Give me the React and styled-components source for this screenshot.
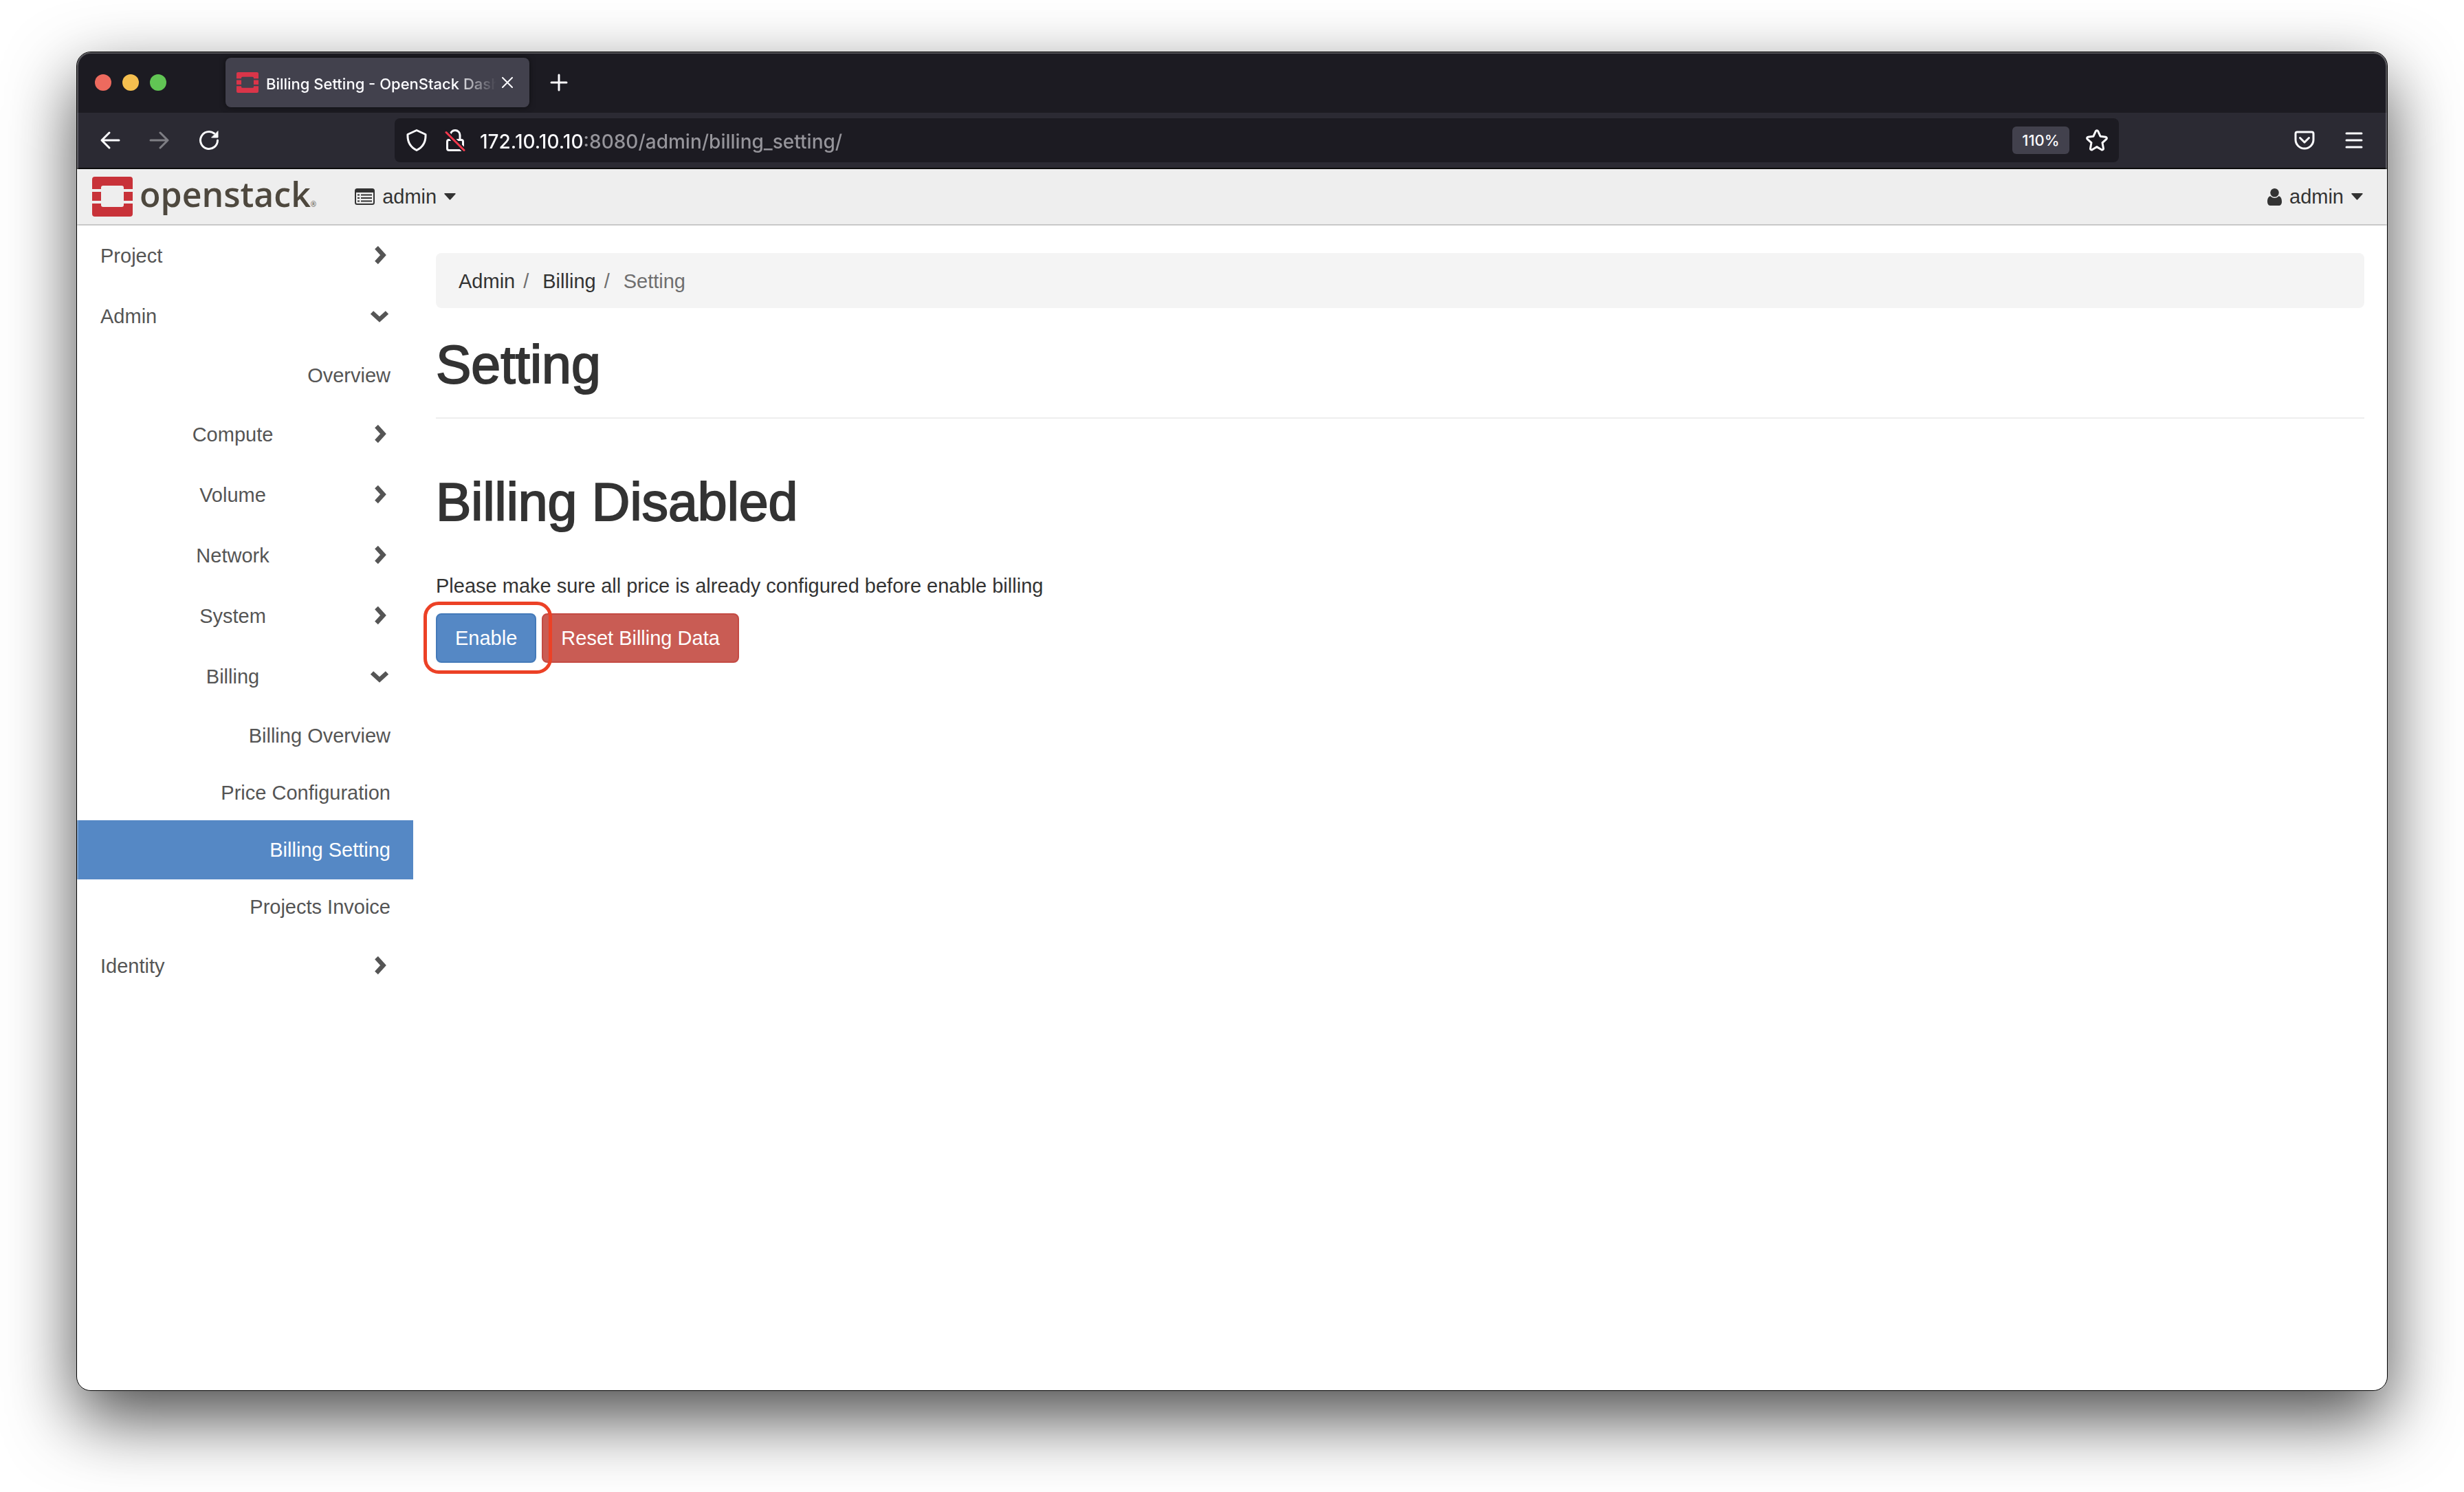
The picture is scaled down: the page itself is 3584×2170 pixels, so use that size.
import React from "react";
import styled, { createGlobalStyle, css } from "styled-components";

const GlobalStyle = createGlobalStyle`
  *, *::before, *::after { box-sizing: border-box; }
  body {
    margin: 0;
    background: #fff;
    font-family: "Liberation Sans", Arial, sans-serif;
    font-size: 29px;
    line-height: 40px;
    color: #333;
  }
  button, input { font: inherit; color: inherit; }
  a { color: inherit; text-decoration: none; }
  svg { display: block; flex: none; }
`;

const plainButton = css`
  display: flex;
  align-items: center;
  justify-content: center;
  padding: 0;
  border: 0;
  background: none;
  cursor: pointer;
`;

/* Desktop and window */

const Desktop = styled.div`
  display: flex;
  min-height: 100vh;
  padding: 75px 111px 147px;
  overflow: hidden;
`;

const Window = styled.div`
  position: relative;
  display: flex;
  flex: 1;
  flex-direction: column;
  min-width: 0;
  border: 1px solid #000;
  border-radius: 21px;
  background: #fff;
  box-shadow: 0 40px 100px rgba(0, 0, 0, 0.7);
  overflow: hidden;

  &::after {
    content: "";
    position: absolute;
    inset: 0;
    border-radius: 20px;
    box-shadow: inset 0 0 0 2px rgba(255, 255, 255, 0.25);
    pointer-events: none;
  }
`;

/* Browser chrome */

const TabStrip = styled.div`
  display: flex;
  align-items: center;
  height: 88px;
  padding-left: 26px;
  background: #1c1b22;
  color: #fbfbfe;
`;

const WindowControls = styled.div`
  display: flex;
  gap: 16px;
  margin-right: 86px;
`;

const WindowControl = styled.button`
  width: 24px;
  height: 24px;
  padding: 0;
  border: 0;
  border-radius: 50%;
  background: ${(p) => p.$color};
`;

const Tab = styled.div`
  display: flex;
  align-items: center;
  width: 442px;
  height: 72px;
  padding: 0 16px;
  border-radius: 8px;
  background: #42414d;
  box-shadow: 0 0 8px rgba(0, 0, 0, 0.5);
`;

const TabTitle = styled.span`
  flex: 1;
  min-width: 0;
  margin-left: 11px;
  padding-top: 3px;
  overflow: hidden;
  white-space: nowrap;
  font-family: Inter, "Liberation Sans", sans-serif;
  font-size: 22px;
  font-weight: 500;
  mask-image: linear-gradient(90deg, #000 calc(100% - 60px), transparent);
`;

const TabClose = styled.button`
  ${plainButton}
  width: 32px;
  height: 32px;
`;

const NewTab = styled.button`
  ${plainButton}
  width: 86px;
  height: 72px;
`;

const Toolbar = styled.div`
  display: flex;
  align-items: center;
  height: 82px;
  padding: 0 12px;
  border-bottom: 2px solid #0c0c0d;
  background: #2b2a33;
  color: #fbfbfe;
`;

const ToolButton = styled.button`
  ${plainButton}
  width: 72px;
  height: 64px;
  opacity: ${(p) => (p.disabled ? 0.4 : 1)};
`;

const ToolSpacer = styled.div`
  flex: 0 0 234px;
`;

const AddressBar = styled.div`
  display: flex;
  flex: 1;
  align-items: center;
  height: 64px;
  padding: 0 16px;
  border-radius: 8px;
  background: #1c1b22;
`;

const SiteButton = styled.button`
  ${plainButton}
  width: 32px;
  height: 40px;
  margin-right: ${(p) => p.$after}px;
`;

const AddressInput = styled.input`
  flex: 1;
  min-width: 0;
  height: 44px;
  padding: 3px 0 0;
  border: 0;
  outline: 0;
  font-family: Inter, "Liberation Sans", sans-serif;
  font-size: 28px;
  font-weight: 500;
  background: linear-gradient(90deg, #fbfbfe 153px, #96959b 153px);
  background-clip: text;
  -webkit-text-fill-color: transparent;
`;

const ZoomBadge = styled.button`
  ${plainButton}
  width: 83px;
  height: 40px;
  margin-right: 24px;
  border-radius: 6px;
  background: #42414d;
  font-family: Inter, "Liberation Sans", sans-serif;
  font-size: 22px;
  font-weight: 500;
`;

/* Dashboard header */

const Header = styled.header`
  display: flex;
  align-items: center;
  justify-content: space-between;
  height: 82px;
  padding: 0 35px 0 22px;
  border-bottom: 2px solid #c8c8c8;
  background: #eee;
`;

const HeaderLeft = styled.div`
  display: flex;
  align-items: center;
  gap: 56px;
`;

const Brand = styled.a`
  display: flex;
  align-items: center;
  gap: 10px;
`;

const BrandName = styled.span`
  padding-bottom: 8px;
  font-family: "Open Sans", "Noto Sans", sans-serif;
  font-size: 50px;
  font-weight: 600;
  line-height: 64px;
  color: #4e483e;
`;

const Registered = styled.small`
  font-size: 10px;
  font-weight: 400;
  line-height: 10px;
`;

const Menu = styled.button`
  ${plainButton}
  gap: 11px;
`;

/* Dashboard body */

const Body = styled.div`
  display: flex;
  flex: 1;
`;

const Sidebar = styled.nav`
  flex: 0 0 489px;
  color: #555;
`;

const NavList = styled.ul`
  display: flex;
  flex-direction: column;
  margin: 0;
  padding: 0;
  list-style: none;
`;

const NavToggle = styled.button`
  ${plainButton}
  gap: 4px;
  width: 100%;
  height: 88px;
  padding: 0 34px;
  text-align: ${(p) => (p.$level === 1 ? "left" : "center")};
`;

const NavLabel = styled.span`
  flex: 1;
`;

const LeafItem = styled.li`
  margin: -1px 0;

  & + & {
    margin-top: -2px;
  }
`;

const Leaf = styled.a`
  display: flex;
  align-items: center;
  justify-content: flex-end;
  height: 86px;
  padding: 0 33px;
  background: ${(p) => (p.$active ? "#5588c5" : "transparent")};
  color: ${(p) => (p.$active ? "#fff" : "inherit")};
`;

const Main = styled.main`
  flex: 1;
  min-width: 0;
  padding: 40px 33px;
`;

const Breadcrumb = styled.ol`
  display: flex;
  margin: 0;
  padding: 21px 33px 19px;
  border-radius: 8px;
  background: #f4f4f4;
  list-style: none;
`;

const Crumb = styled.li`
  color: ${(p) => (p.$current ? "#6f6f6f" : "#333")};

  &:not(:first-child)::before {
    content: "/";
    margin: 0 20px 0 12px;
    color: #6f6f6f;
  }
`;

const Title = styled.h1`
  margin: 0;
  font-size: 77px;
  font-weight: 400;
  line-height: 84px;
  -webkit-text-stroke: 2px currentColor;
`;

const PageHeader = styled.div`
  padding: 40px 0 35px;
  border-bottom: 2px solid #eee;
`;

const Panel = styled.section`
  padding-top: 79px;
`;

const Note = styled.p`
  margin: 60px 0 20px;
`;

const Actions = styled.div`
  display: flex;
  gap: 8px;
`;

const Action = styled.button`
  height: 72px;
  padding: 0 26px;
  border: 2px solid ${(p) => (p.$danger ? "#c44a43" : "#447ab9")};
  border-radius: 8px;
  background: ${(p) => (p.$danger ? "#c95c54" : "#5588c5")};
  color: #fff;
  cursor: pointer;
`;

const Marked = styled.div`
  position: relative;

  &::after {
    content: "";
    position: absolute;
    z-index: 1;
    inset: -17px -23px -16px -18px;
    border: 5px solid #ec4126;
    border-radius: 22px;
    pointer-events: none;
  }
`;

/* Icons */

const Line = ({ w, h, sw = 3, children, ...rest }) => (
  <svg width={w} height={h} viewBox={`0 0 ${w} ${h}`} fill="none" stroke="currentColor" strokeWidth={sw} strokeLinecap="round" strokeLinejoin="round" aria-hidden="true" {...rest}>
    {children}
  </svg>
);

const OpenStackMark = ({ w, h, color }) => (
  <svg width={w} height={h} viewBox="0 0 59 58" preserveAspectRatio="none" aria-hidden="true" fill={color}>
    <path d="M4 0h51a4 4 0 0 1 4 4v14H46v-2a3 3 0 0 0-3-3H16a3 3 0 0 0-3 3v2H0V4a4 4 0 0 1 4-4z" />
    <path d="M0 22h13v13H0zM46 22h13v13H46z" />
    <path d="M0 39h13v2a3 3 0 0 0 3 3h27a3 3 0 0 0 3-3v-2h13v15a4 4 0 0 1-4 4H4a4 4 0 0 1-4-4z" />
  </svg>
);

const Chevron = ({ open }) => (
  <svg width="32" height="32" viewBox="0 0 32 32" fill="none" stroke="currentColor" strokeWidth="6.4" aria-hidden="true">
    <path d={open ? "M6 10.500 17 20.500 28 10.500" : "M12.500 4 22.500 15 12.500 26"} />
  </svg>
);

const Caret = () => (
  <svg width="17" height="10" viewBox="0 0 17 10" fill="currentColor" aria-hidden="true">
    <path d="M1 0h15q1.400.8.300 1.600L9.300 9.300q-.8.800-1.600 0L.7 1.600Q-.4.600 1 0z" />
  </svg>
);

const ListIcon = () => (
  <svg width="29" height="24" viewBox="0 0 29 24" aria-hidden="true">
    <rect x="1" y="1" width="27" height="22" rx="2.500" fill="none" stroke="currentColor" strokeWidth="2" />
    <path d="M1 2h27v4H1z" fill="currentColor" />
    <path d="M4 9.500h3M4 14h3M4 18.500h3M9 9.500h16M9 14h16M9 18.500h16" stroke="currentColor" strokeWidth="2" />
  </svg>
);

const UserIcon = () => (
  <svg width="21" height="25" viewBox="0 0 21 25" fill="currentColor" aria-hidden="true">
    <ellipse cx="10.500" cy="6.300" rx="6.200" ry="6.300" />
    <path d="M4.500 11.300C1.500 11.800 0 15 0 19.500 0 23 1.800 25 4.500 25h12c2.700 0 4.500-2 4.500-5.500 0-4.500-1.500-7.700-4.500-8.200-1.500 1.500-3.500 2.700-6 2.700s-4.500-1.200-6-2.700z" />
  </svg>
);

/* Navigation data */

const navigation = [
  { label: "Project" },
  {
    label: "Admin",
    children: [
      { label: "Overview", href: "#overview" },
      { label: "Compute" },
      { label: "Volume" },
      { label: "Network" },
      { label: "System" },
      {
        label: "Billing",
        children: [
          { label: "Billing Overview", href: "#billing-overview" },
          { label: "Price Configuration", href: "#price-configuration" },
          { label: "Billing Setting", href: "#billing-setting", active: true },
          { label: "Projects Invoice", href: "#projects-invoice" },
        ],
      },
    ],
  },
  { label: "Identity" },
];

const NavTree = ({ items, level = 1 }) => (
  <NavList>
    {items.map((item) =>
      item.href ? (
        <LeafItem key={item.label}>
          <Leaf href={item.href} $active={item.active} aria-current={item.active ? "page" : undefined}>
            {item.label}
          </Leaf>
        </LeafItem>
      ) : (
        <li key={item.label}>
          <NavToggle $level={level} aria-expanded={Boolean(item.children)}>
            <NavLabel>{item.label}</NavLabel>
            <Chevron open={Boolean(item.children)} />
          </NavToggle>
          {item.children && <NavTree items={item.children} level={level + 1} />}
        </li>
      )
    )}
  </NavList>
);

export default function App() {
  return (
    <>
      <GlobalStyle />
      <Desktop>
        <Window>
          <TabStrip>
            <WindowControls>
              <WindowControl $color="#ed6a5e" aria-label="Close window" />
              <WindowControl $color="#f5bf4f" aria-label="Minimize window" />
              <WindowControl $color="#61c554" aria-label="Zoom window" />
            </WindowControls>
            <Tab>
              <OpenStackMark w={32} h={30} color="#da3549" />
              <TabTitle>Billing Setting - OpenStack Dashboard</TabTitle>
              <TabClose aria-label="Close tab">
                <Line w={16} h={16} sw={2}><path d="M1 1 15 15M15 1 1 15" /></Line>
              </TabClose>
            </Tab>
            <NewTab aria-label="New tab">
              <Line w={26} h={26} sw={3}><path d="M13 2v22M2 13h22" /></Line>
            </NewTab>
          </TabStrip>

          <Toolbar>
            <ToolButton aria-label="Back">
              <Line w={30} h={28}><path d="M28 14H3M14 3 3 14l11 11" /></Line>
            </ToolButton>
            <ToolButton aria-label="Forward" disabled>
              <Line w={30} h={28}><path d="M2 14h25M16 3l11 11-11 11" /></Line>
            </ToolButton>
            <ToolButton aria-label="Reload">
              <Line w={30} h={30}>
                <path d="M27.500 15A12.500 12.500 0 1 1 22.500 5" />
                <path d="M28 2v9h-9z" fill="currentColor" strokeWidth="1" />
              </Line>
            </ToolButton>
            <ToolSpacer />
            <AddressBar>
              <SiteButton $after={24} aria-label="Tracking protection">
                <Line w={30} h={34}><path d="M15 2.500 28 8.500C28.500 19 24 27 15 31.500 6 27 1.500 19 2 8.500z" /></Line>
              </SiteButton>
              <SiteButton $after={20} aria-label="Connection is not secure">
                <Line w={30} h={34}>
                  <path d="M8 9.500a7 7 0 0 1 14 0V16M8 16.500h-2a2.500 2.500 0 0 0-2.500 2.500v10A2.500 2.500 0 0 0 6 31.500h18a2.500 2.500 0 0 0 2.500-2.500V19a2.500 2.500 0 0 0-2.500-2.500H15" />
                  <path d="M2 5.500 28 31.500" stroke="#1c1b22" strokeWidth="7" />
                  <path d="M2 5.500 28 31.500" stroke="#f2384c" />
                </Line>
              </SiteButton>
              <AddressInput aria-label="Address" defaultValue="172.10.10.10:8080/admin/billing_setting/" />
              <ZoomBadge>110%</ZoomBadge>
              <SiteButton $after={0} aria-label="Bookmark this page">
                <Line w={32} h={32}>
                  <path d="M14.300 2.800a2 2 0 0 1 3.400 0l3.300 7.400 7.800 1a1.800 1.800 0 0 1 1 3.100l-5.800 5.300 1.500 8.300a1.800 1.800 0 0 1-2.600 1.900L16 25.600l-6.900 4.200a1.800 1.800 0 0 1-2.600-1.900L8 19.600l-5.800-5.300a1.800 1.800 0 0 1 1-3.100l7.800-1z" />
                </Line>
              </SiteButton>
            </AddressBar>
            <ToolSpacer />
            <ToolButton aria-label="Save to Pocket">
              <Line w={30} h={28}>
                <path d="M4.500 2h21A2.500 2.500 0 0 1 28 4.500V13a13 13 0 0 1-26 0V4.500A2.500 2.500 0 0 1 4.500 2z" />
                <path d="M8.500 10.500 15 17l6.500-6.500" />
              </Line>
            </ToolButton>
            <ToolButton aria-label="Open application menu">
              <Line w={26} h={24}><path d="M2 2h22M2 12h22M2 22h22" /></Line>
            </ToolButton>
          </Toolbar>

          <Header>
            <HeaderLeft>
              <Brand href="#home">
                <OpenStackMark w={59} h={58} color="#c83239" />
                <BrandName>openstack<Registered>®</Registered></BrandName>
              </Brand>
              <Menu>
                <ListIcon />
                admin
                <Caret />
              </Menu>
            </HeaderLeft>
            <Menu>
              <UserIcon />
              admin
              <Caret />
            </Menu>
          </Header>

          <Body>
            <Sidebar aria-label="Dashboard">
              <NavTree items={navigation} />
            </Sidebar>
            <Main>
              <Breadcrumb>
                <Crumb><a href="#admin">Admin</a></Crumb>
                <Crumb><a href="#billing">Billing</a></Crumb>
                <Crumb $current>Setting</Crumb>
              </Breadcrumb>
              <PageHeader>
                <Title>Setting</Title>
              </PageHeader>
              <Panel>
                <Title as="h2">Billing Disabled</Title>
                <Note>Please make sure all price is already configured before enable billing</Note>
                <Actions>
                  <Marked><Action>Enable</Action></Marked>
                  <Action $danger>Reset Billing Data</Action>
                </Actions>
              </Panel>
            </Main>
          </Body>
        </Window>
      </Desktop>
    </>
  );
}
